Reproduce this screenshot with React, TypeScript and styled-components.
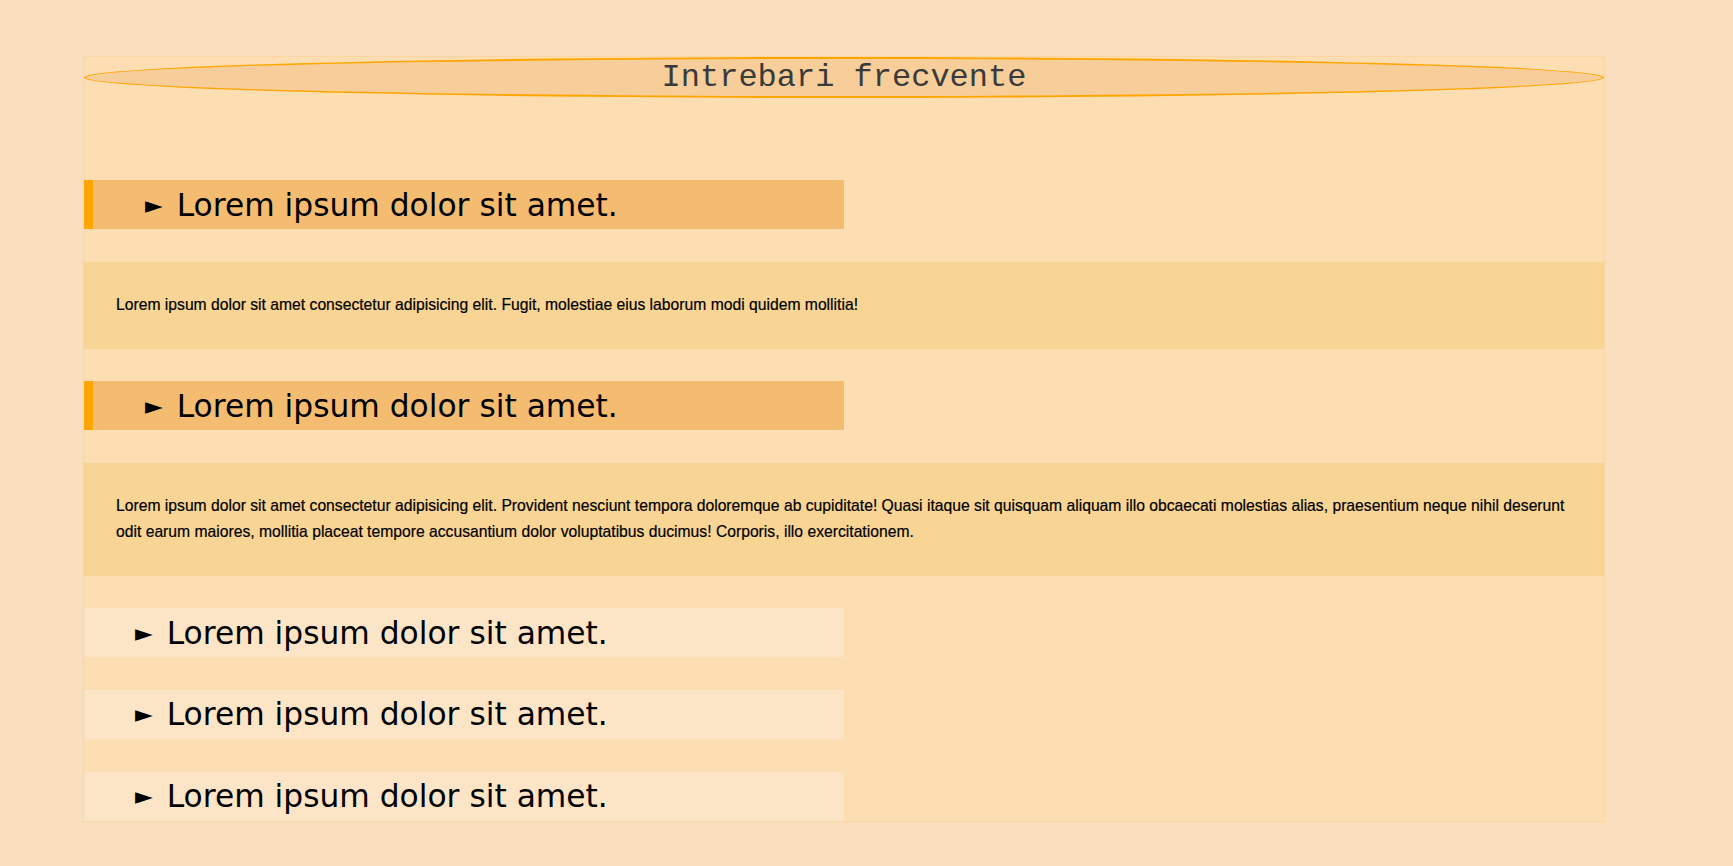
import styled, { createGlobalStyle } from 'styled-components'

const GlobalStyle = createGlobalStyle`
  body {
    margin: 8px;
    background: #f9dfbe;
  }
`

interface Faq {
  question: string
  answer?: string
}

const faqs: Faq[] = [
  {
    question: 'Lorem ipsum dolor sit amet.',
    answer:
      'Lorem ipsum dolor sit amet consectetur adipisicing elit. Fugit, molestiae eius laborum modi quidem mollitia!',
  },
  {
    question: 'Lorem ipsum dolor sit amet.',
    answer:
      'Lorem ipsum dolor sit amet consectetur adipisicing elit. Provident nesciunt tempora doloremque ab cupiditate! Quasi itaque sit quisquam aliquam illo obcaecati molestias alias, praesentium neque nihil deserunt odit earum maiores, mollitia placeat tempore accusantium dolor voluptatibus ducimus! Corporis, illo exercitationem.',
  },
  { question: 'Lorem ipsum dolor sit amet.' },
  { question: 'Lorem ipsum dolor sit amet.' },
  { question: 'Lorem ipsum dolor sit amet.' },
]

const Section = styled.section`
  width: 1522px;
  margin: 48px 0 0 75px;
  box-sizing: border-box;
  border: 1px solid #fbd6a3;
  background: #fddeb3;
`

const Title = styled.h2`
  margin: 0;
  box-sizing: border-box;
  height: 41px;
  border: 2px solid #ffa500;
  border-radius: 50%;
  background: #f7cd99;
  font-family: 'Liberation Mono', monospace;
  font-size: 32px;
  font-weight: normal;
  line-height: 38px;
  text-align: center;
  color: #3a3a3a;
`

const List = styled.div`
  display: flex;
  flex-direction: column;
  gap: 32.6px;
  padding-top: 82px;
`

const Question = styled.div<{ $open: boolean }>`
  width: 50%;
  height: 49px;
  box-sizing: border-box;
  display: flex;
  align-items: center;
  padding-left: ${(p) => (p.$open ? '52px' : '51px')};
  border-left: ${(p) => (p.$open ? '9px solid #ffa500' : 'none')};
  background: ${(p) => (p.$open ? '#f4bc71' : '#fce5c7')};
  font-family: 'DejaVu Sans', 'Open Sans', sans-serif;
  font-size: 31.3px;
  color: #000;
  cursor: pointer;
`

const Marker = styled.span`
  font-family: 'DejaVu Sans', sans-serif;
  font-size: 23px;
  margin-right: 14px;
`

const Answer = styled.p`
  margin: 0;
  padding: 30.5px 32px;
  background: #f8d594;
  font-family: 'Liberation Sans', Arial, sans-serif;
  font-size: 15.7px;
  line-height: 26px;
  color: #000;
  -webkit-text-stroke: 0.2px #000;
`

export default function App() {
  return (
    <>
      <GlobalStyle />
      <Section>
        <Title>Intrebari frecvente</Title>
        <List>
          {faqs.map((f, i) => (
            <>
              <Question key={`q${i}`} $open={!!f.answer}>
                <Marker>►</Marker>
                {f.question}
              </Question>
              {f.answer && <Answer key={`a${i}`}>{f.answer}</Answer>}
            </>
          ))}
        </List>
      </Section>
    </>
  )
}
